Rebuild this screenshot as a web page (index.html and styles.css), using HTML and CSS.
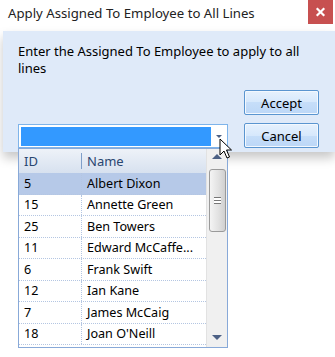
FILE: index.html
```html
<!DOCTYPE html>
<html lang="en">
<head>
  <meta charset="UTF-8" />
  <title>Apply Assigned To Employee to All Lines</title>
  <link rel="stylesheet" href="styles.css">
</head>
<body>

  <div class="titlebar">
    <div class="title">Apply Assigned To Employee to All Lines</div>
    <svg class="close-btn" width="25" height="24" viewBox="0 0 25 24">
      <rect x="0" y="0" width="25" height="24" fill="#c75050"/>
      <path d="M9.5 9 L15.5 15 M15.5 9 L9.5 15" stroke="#fff" stroke-width="2.2" stroke-linecap="square"/>
    </svg>
  </div>

  <div class="dialog">
    <p class="message">Enter the Assigned To Employee to apply to all lines</p>

    <div class="controls">
      <div class="combo">
        <div class="combo-field"></div>
        <div class="combo-arrow"><span class="tri-down small"></span></div>

        <!-- dropdown list -->
        <div class="dropdown">
          <div class="grid">
            <div class="row header">
              <div class="cell id">ID</div>
              <div class="cell name">Name</div>
            </div>
            <div class="row selected">
              <div class="cell id">5</div>
              <div class="cell name">Albert Dixon</div>
            </div>
            <div class="row">
              <div class="cell id">15</div>
              <div class="cell name">Annette Green</div>
            </div>
            <div class="row">
              <div class="cell id">25</div>
              <div class="cell name">Ben Towers</div>
            </div>
            <div class="row">
              <div class="cell id">11</div>
              <div class="cell name">Edward McCaffe...</div>
            </div>
            <div class="row">
              <div class="cell id">6</div>
              <div class="cell name">Frank Swift</div>
            </div>
            <div class="row">
              <div class="cell id">12</div>
              <div class="cell name">Ian Kane</div>
            </div>
            <div class="row">
              <div class="cell id">7</div>
              <div class="cell name">James McCaig</div>
            </div>
            <div class="row">
              <div class="cell id">18</div>
              <div class="cell name">Joan O'Neill</div>
            </div>
          </div>
          <div class="scrollbar">
            <span class="tri-up"></span>
            <div class="thumb"><span class="grip"></span></div>
            <span class="tri-down"></span>
          </div>
        </div>
      </div>

      <div class="buttons">
        <button>Accept</button>
        <button>Cancel</button>
      </div>
    </div>
  </div>

  <!-- mouse pointer -->
  <svg class="cursor" width="14" height="22" viewBox="0 0 14 22">
    <path d="M1 1 L1 17 L5 13 L8 20 L10.5 19 L7.5 12 L12.5 12 Z" fill="#fff" stroke="#000" stroke-width="1" stroke-linejoin="round"/>
  </svg>

</body>
</html>
```

FILE: styles.css
```css
body {
  margin: 0;
  background: #fff;
  font-family: "Noto Sans", "Open Sans", sans-serif;
  color: #000;
  position: relative;
  height: 357px;
  overflow: hidden;
}

.titlebar {
  height: 31px;
  display: flex;
  justify-content: space-between;
  align-items: flex-start;
  padding-left: 8px;
  padding-right: 2px;
}

.title {
  font-size: 13.2px;
  line-height: 14px;
  margin-top: 6px;
  color: #222;
  white-space: nowrap;
}

.close-btn {
  flex: 0 0 25px;
  display: block;
}

.dialog {
  margin-left: 3px;
  height: 121px;
  padding: 12px 16px 0 15px;
  box-sizing: border-box;
  background: #dfeaf9;
  box-shadow: 0 6px 10px rgba(0,0,0,0.22);
}

.message {
  margin: 0;
  width: 290px;
  font-size: 13px;
  line-height: 17px;
}

.controls {
  display: flex;
  justify-content: space-between;
  align-items: flex-end;
  margin-top: 13px;
}

.buttons {
  display: flex;
  flex-direction: column;
  gap: 8px;
}

button {
  width: 75px;
  height: 25px;
  font-family: inherit;
  font-size: 13px;
  padding: 0;
  border: 1px solid #5a95d0;
  border-radius: 2px;
  background: linear-gradient(#e6f1fd, #d6e8fc 50%, #c6def9 50%, #bcd7f7);
  box-shadow: inset 0 0 0 1px #f3f8fe;
  color: #000;
}

.combo {
  position: relative;
  width: 210px;
  height: 24px;
  border: 1px solid #7eb4ea;
  box-sizing: border-box;
  background: #fff;
  display: flex;
  padding: 2px 0 1px 2px;
}

.combo-field {
  flex: 1;
  background: #3399ff;
}

.combo-arrow {
  width: 16px;
  display: flex;
  align-items: center;
  justify-content: center;
}

.tri-down, .tri-up {
  display: block;
  width: 0;
  height: 0;
  border-left: 5px solid transparent;
  border-right: 5px solid transparent;
}

.tri-down {
  border-top: 5px solid #4d6185;
}

.tri-down.small {
  border-left-width: 3px;
  border-right-width: 3px;
  border-top-width: 3px;
}

.tri-up {
  border-bottom: 5px solid #4d6185;
}

.dropdown {
  position: absolute;
  left: -1px;
  top: 23px;
  width: 210px;
  height: 200px;
  box-sizing: border-box;
  border: 1px solid #88a9d8;
  background: #fff;
  display: flex;
  z-index: 2;
}

.grid {
  flex: 1;
}

.row {
  display: flex;
  height: 21.5px;
  border-bottom: 1px dotted #b4c6e2;
  box-sizing: border-box;
  font-size: 12.6px;
  align-items: center;
}

.row.header {
  height: 24px;
  border-bottom: none;
  background: linear-gradient(#eef2f8, #d7e1ef);
  color: #2a4670;
  font-size: 13px;
}

.row.selected {
  background: #b6c9e8;
}

.cell.id {
  width: 63px;
  padding-left: 5px;
  box-sizing: border-box;
  border-right: 1px dotted #b4c6e2;
  align-self: stretch;
  display: flex;
  align-items: center;
}

.header .cell.id {
  border-right: 1px solid #7f9fc9;
  align-self: center;
  height: 16px;
}

.cell.name {
  padding-left: 5px;
  white-space: nowrap;
}

.scrollbar {
  width: 21px;
  background: #f0f0f0;
  border-left: 1px solid #e2e2e2;
  display: flex;
  flex-direction: column;
  align-items: center;
  padding: 5px 0 7px;
  box-sizing: border-box;
}

.thumb {
  margin-top: 10px;
  width: 17px;
  height: 63px;
  box-sizing: border-box;
  border: 1px solid #9a9a9a;
  border-radius: 3px;
  background: linear-gradient(90deg, #f4f4f4, #e2e2e2 55%, #d0d0d0);
  display: flex;
  align-items: center;
  justify-content: center;
}

.grip {
  width: 7px;
  height: 5px;
  border-top: 1px solid #777;
  border-bottom: 1px solid #777;
  background: linear-gradient(#fff 0 2px, #777 2px 3px, #fff 3px);
}

.scrollbar .tri-down {
  margin-top: auto;
}

.cursor {
  position: absolute;
  left: 219px;
  top: 138px;
  z-index: 5;
}
```
